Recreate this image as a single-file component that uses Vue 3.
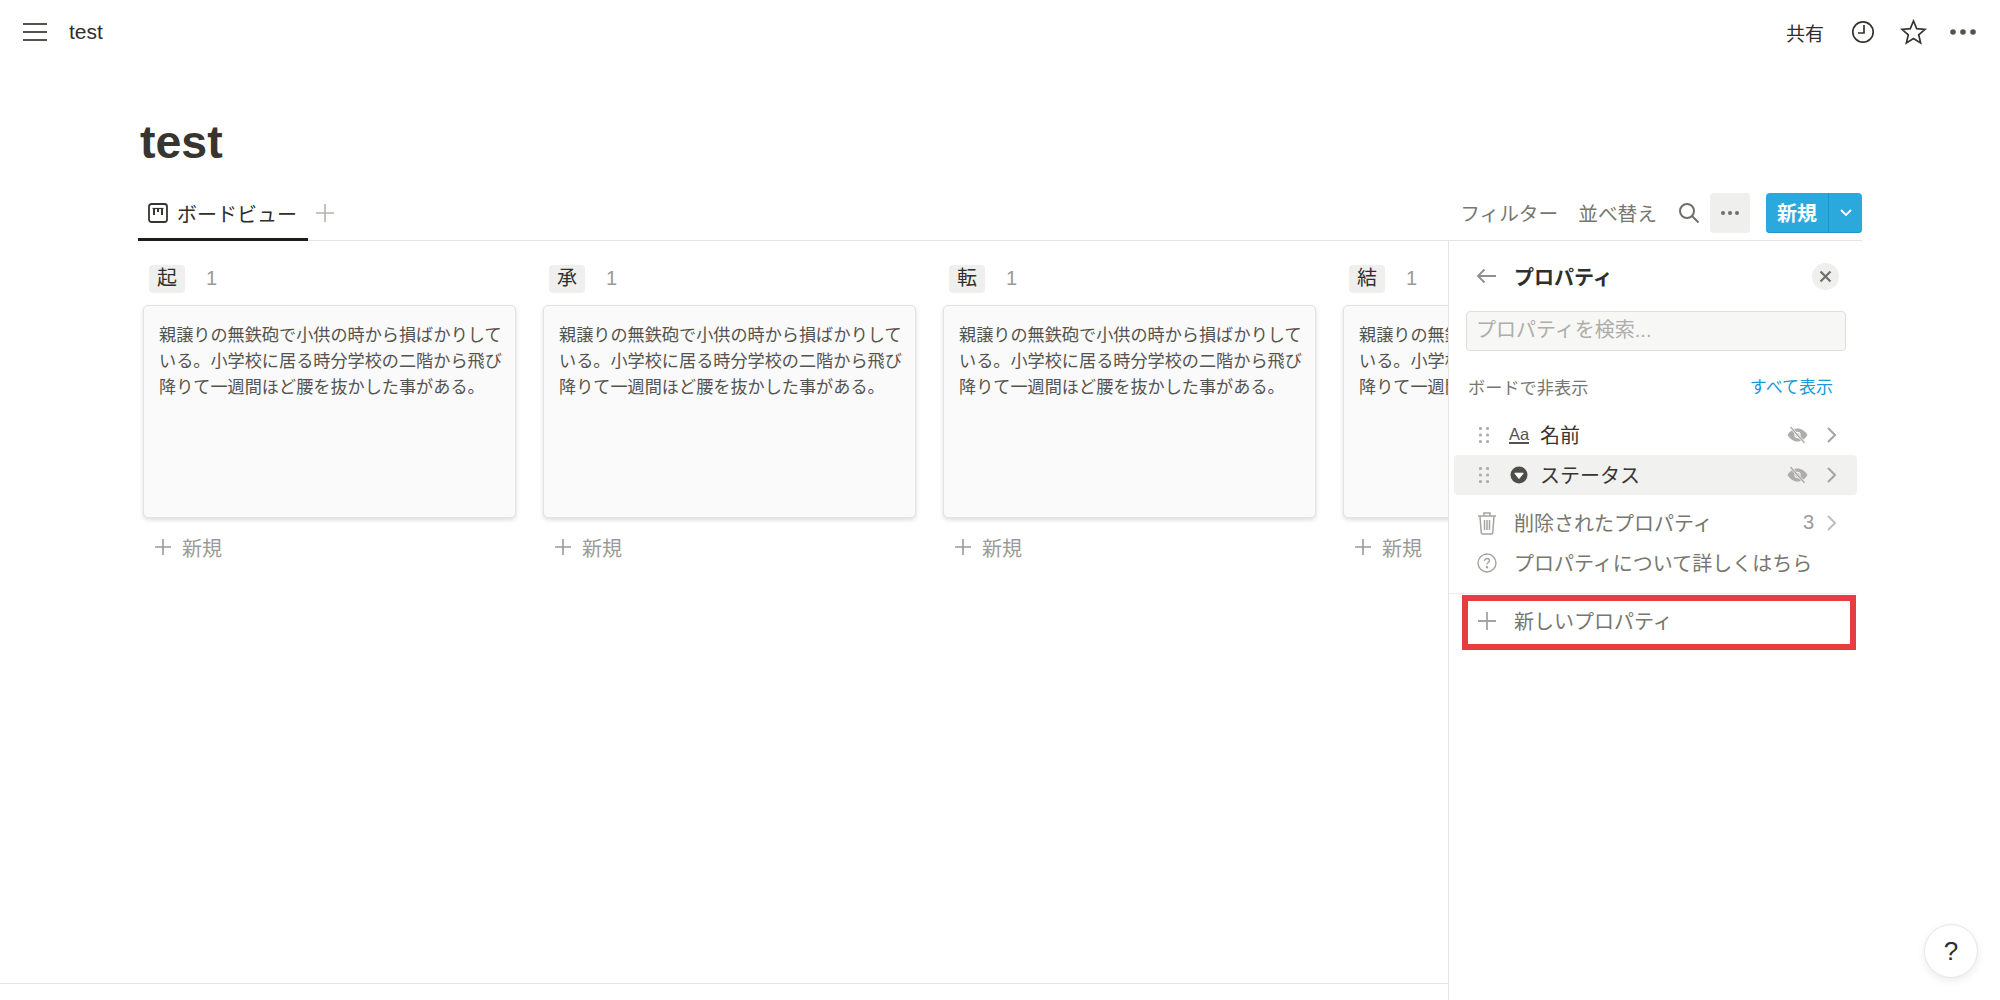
<template>
  <div class="page">
    <header class="topbar">
      <svg class="menu" width="24" height="20" viewBox="0 0 24 20"><path d="M0 2h24M0 10h24M0 18h24" stroke="#55534e" stroke-width="2.2" /></svg>
      <span class="crumb">test</span>
      <div class="top-actions">
        <span class="share">共有</span>
        <svg width="24" height="24" viewBox="0 0 24 24" fill="none" stroke="#37352f" stroke-width="1.7"><circle cx="12" cy="12" r="10.2" /><path d="M13 5v8H7" /></svg>
        <svg class="star" width="27" height="26" viewBox="0 0 27 26" fill="none" stroke="#37352f" stroke-width="1.7" stroke-linejoin="miter"><path d="M13.5 2l3.2 7.7 8.3.7-6.3 5.4 1.9 8.1-7.1-4.300-7.1 4.300 1.9-8.100L2 10.400l8.300-.7z" /></svg>
        <svg width="26" height="6" viewBox="0 0 26 6" fill="#55534e"><circle cx="3" cy="3" r="2.8" /><circle cx="13" cy="3" r="2.8" /><circle cx="23" cy="3" r="2.8" /></svg>
      </div>
    </header>

    <h1 class="title">test</h1>

    <div class="tabs">
      <div class="tab">
        <svg width="20" height="20" viewBox="0 0 20 20" fill="none" stroke="#37352f"><rect x="1" y="1" width="18" height="18" rx="2.5" stroke-width="1.8" /><path d="M4.500 5.500h11" stroke-width="1.2" /><path d="M6 5v7M10 5v4M14 5v7" stroke-width="2" /></svg>
        <span>ボードビュー</span>
      </div>
      <svg class="tab-add" width="18" height="18" viewBox="0 0 18 18"><path d="M9 0v18M0 9h18" stroke="#b3b2af" stroke-width="1.6" /></svg>
      <div class="tools">
        <span class="tool-filter">フィルター</span>
        <span class="tool-sort">並べ替え</span>
        <svg width="22" height="22" viewBox="0 0 22 22" fill="none" stroke="#6f6e69" stroke-width="2"><circle cx="9" cy="9" r="7" /><path d="M14 14l6.5 6.5" /></svg>
        <div class="more">
          <svg width="18" height="4" viewBox="0 0 18 4" fill="#6f6e69"><circle cx="2" cy="2" r="2" /><circle cx="9" cy="2" r="2" /><circle cx="16" cy="2" r="2" /></svg>
        </div>
        <div class="new-btn">
          <span class="new-label">新規</span>
          <span class="new-arrow">
            <svg width="12" height="8" viewBox="0 0 12 8" fill="none" stroke="#fff" stroke-width="1.8"><path d="M1 1l5 5 5-5" /></svg>
          </span>
        </div>
      </div>
    </div>

    <div class="content">
      <div class="board">
        <section v-for="col in columns" :key="col" class="column">
          <div class="col-head">
            <span class="pill">{{ col }}</span>
            <span class="count">1</span>
          </div>
          <div class="card">{{ body }}</div>
          <div class="add">
            <svg width="18" height="18" viewBox="0 0 18 18"><path d="M9 1v16M1 9h16" stroke="#9b9a97" stroke-width="1.6" /></svg>
            <span>新規</span>
          </div>
        </section>
      </div>

      <aside class="panel">
        <div class="panel-head">
          <svg width="20" height="16" viewBox="0 0 20 16" fill="none" stroke="#8f8e8a" stroke-width="1.8"><path d="M20 8H2M8.5 1.500L2 8l6.500 6.500" /></svg>
          <span class="panel-title">プロパティ</span>
          <span class="close">
            <svg width="13" height="13" viewBox="0 0 13 13" stroke="#6f6e69" stroke-width="2.2"><path d="M1.500 1.500l10 10M11.500 1.500l-10 10" /></svg>
          </span>
        </div>
        <div class="search">プロパティを検索...</div>
        <div class="hidden-head">
          <span>ボードで非表示</span>
          <span class="show-all">すべて表示</span>
        </div>

        <div class="prop">
          <svg class="grip" width="10" height="16" viewBox="0 0 10 16" fill="#b0afac"><circle v-for="d in grip" :key="d[0] + '-' + d[1]" :cx="d[0]" :cy="d[1]" r="1.6" /></svg>
          <span class="aa">Aa</span>
          <span class="prop-name name-first">名前</span>
          <svg class="eye" width="21" height="16" viewBox="0 0 21 16"><path d="M.5 8C3 4 6.5 1.500 10.500 1.500S18 4 20.500 8c-2.500 4-6 6.500-10 6.500S3 12 .5 8z" fill="#aeadaa" /><circle cx="10.500" cy="8" r="2.600" fill="none" stroke="#fff" stroke-width="1.1" /><path d="M3.500 0l14 16" stroke="#fff" stroke-width="2.6" /><path d="M3.500 0l14 16" stroke="#a3a29f" stroke-width="1.2" /></svg>
          <svg class="chev" width="9" height="16" viewBox="0 0 9 16" fill="none" stroke="#a5a4a1" stroke-width="2"><path d="M1 1l7 7-7 7" /></svg>
        </div>
        <div class="prop active">
          <svg class="grip" width="10" height="16" viewBox="0 0 10 16" fill="#b0afac"><circle v-for="d in grip" :key="d[0] + '-' + d[1]" :cx="d[0]" :cy="d[1]" r="1.6" /></svg>
          <svg class="status" width="18" height="18" viewBox="0 0 18 18"><circle cx="9" cy="9" r="8.500" fill="#4f4d47" /><path d="M4.800 7.200h8.400L9 12.600z" fill="#fff" stroke="#fff" stroke-linejoin="round" /></svg>
          <span class="prop-name">ステータス</span>
          <svg class="eye" width="21" height="16" viewBox="0 0 21 16"><path d="M.5 8C3 4 6.5 1.500 10.500 1.500S18 4 20.500 8c-2.500 4-6 6.500-10 6.500S3 12 .5 8z" fill="#aeadaa" /><circle cx="10.500" cy="8" r="2.600" fill="none" stroke="#f1f1f0" stroke-width="1.1" /><path d="M3.500 0l14 16" stroke="#f1f1f0" stroke-width="2.6" /><path d="M3.500 0l14 16" stroke="#a3a29f" stroke-width="1.2" /></svg>
          <svg class="chev" width="9" height="16" viewBox="0 0 9 16" fill="none" stroke="#a5a4a1" stroke-width="2"><path d="M1 1l7 7-7 7" /></svg>
        </div>

        <div class="link first">
          <svg class="link-icon" width="20" height="24" viewBox="0 0 20 24" fill="none" stroke="#a5a4a1" stroke-width="1.5"><path d="M1 5h18M7 5V2h6v3M3 5l1.200 16.500c0 .8.600 1.500 1.500 1.500h8.600c.9 0 1.500-.7 1.500-1.500L17 5M7.500 9v10M10 9v10M12.500 9v10" /></svg>
          <span class="link-text">削除されたプロパティ</span>
          <span class="num">3</span>
          <svg class="chev" width="9" height="16" viewBox="0 0 9 16" fill="none" stroke="#c0bfbc" stroke-width="2"><path d="M1 1l7 7-7 7" /></svg>
        </div>
        <div class="link">
          <svg class="link-icon" width="20" height="20" viewBox="0 0 20 20" fill="none" stroke="#a5a4a1" stroke-width="1.4"><circle cx="10" cy="10" r="9" /><path d="M7.500 8c0-1.600 1.100-2.500 2.500-2.500s2.500 1 2.500 2.200c0 1.800-2.500 1.900-2.500 3.800" /><circle cx="10" cy="14.300" r=".6" /></svg>
          <span class="link-text">プロパティについて詳しくはちら</span>
        </div>

        <div class="new-prop">
          <svg width="20" height="20" viewBox="0 0 20 20"><path d="M10 1v18M1 10h18" stroke="#a5a4a1" stroke-width="1.8" /></svg>
          <span>新しいプロパティ</span>
          <div class="highlight"></div>
        </div>
      </aside>
    </div>

    <div class="help">?</div>
  </div>
</template>

<script setup>
const columns = ['起', '承', '転', '結']
const body = '親譲りの無鉄砲で小供の時から損ばかりしている。小学校に居る時分学校の二階から飛び降りて一週間ほど腰を抜かした事がある。'
const grip = [[1.5, 1.5], [8.5, 1.5], [1.5, 8], [8.5, 8], [1.5, 14.5], [8.5, 14.5]]
</script>

<style>
html, body {
  margin: 0;
  background: #fff;
  overflow: hidden;
}
</style>

<style scoped>
.page {
  position: relative;
  display: flex;
  flex-direction: column;
  height: 1000px;
  overflow: hidden;
  font-family: "Liberation Sans", "Noto Sans CJK JP", sans-serif;
  color: #37352f;
}

.topbar {
  display: flex;
  align-items: center;
  height: 64px;
  padding: 0 24px 0 23px;
  flex: none;
}

.crumb {
  margin-left: 22px;
  font-size: 21px;
  color: #2f2e2a;
}

.top-actions {
  display: flex;
  align-items: center;
  margin-left: auto;
}

.share {
  margin-right: 27px;
  font-size: 19px;
  color: #2f2e2a;
}

.star {
  margin: 0 23px 0 25px;
}

.title {
  margin: 55px 0 0 140px;
  height: 47px;
  font-size: 46.5px;
  line-height: 47px;
  font-weight: 700;
  color: #37352f;
  flex: none;
}

.tabs {
  display: flex;
  align-items: center;
  flex: none;
  width: 1724px;
  height: 75px;
  margin-left: 138px;
  box-sizing: border-box;
  border-bottom: 1px solid #e4e4e2;
}

.tab {
  display: flex;
  align-items: center;
  gap: 9px;
  box-sizing: border-box;
  width: 170px;
  height: 75px;
  padding: 22px 0 0 10px;
  margin-bottom: -1px;
  border-bottom: 3px solid #1d1c19;
  font-size: 20px;
  color: #2f2e2a;
}

.tab-add {
  margin: 19px 0 0 8px;
}

.tools {
  display: flex;
  align-items: center;
  margin: 19px 0 0 auto;
  font-size: 19.7px;
  color: #77766f;
}

.tool-filter {
  margin-right: 20px;
}

.tool-sort {
  margin-right: 21px;
}

.more {
  display: flex;
  align-items: center;
  justify-content: center;
  width: 40px;
  height: 40px;
  margin: 0 16px 0 10px;
  border-radius: 4px;
  background: #efefee;
}

.new-btn {
  display: flex;
  width: 96px;
  height: 40px;
  border-radius: 4px;
  background: #2ba8dc;
  box-shadow: inset 0 -1px 0 #1d97c9;
  color: #fff;
}

.new-label {
  display: flex;
  align-items: center;
  justify-content: center;
  width: 62px;
  font-size: 20px;
  font-weight: 700;
  border-right: 1px solid #1f93c4;
}

.new-arrow {
  display: flex;
  flex: 1;
  align-items: center;
  justify-content: center;
}

.content {
  display: flex;
  flex: 1;
  min-height: 0;
}

.board {
  display: flex;
  gap: 27px;
  width: 1448px;
  flex: none;
  box-sizing: border-box;
  height: 743px;
  padding: 24px 0 0 143px;
  overflow: hidden;
  border-bottom: 1px solid #e4e4e2;
}

.column {
  width: 373px;
  flex: none;
}

.col-head {
  display: flex;
  align-items: center;
  height: 27px;
  margin-bottom: 13px;
  padding-left: 6px;
}

.pill {
  display: block;
  width: 36px;
  height: 28px;
  line-height: 27px;
  text-align: center;
  border-radius: 4px;
  background: #efefee;
  font-size: 20px;
  color: #2f2e2a;
}

.count {
  margin-left: 21px;
  font-size: 20px;
  color: #9b9a97;
}

.card {
  box-sizing: border-box;
  height: 213px;
  padding: 16px 10px 16px 15px;
  border: 1px solid #e2e2e0;
  border-radius: 5px;
  background: #fafafa;
  box-shadow: 0 2px 4px rgba(15, 15, 15, 0.14);
  font-size: 17.15px;
  line-height: 26px;
  color: #55534e;
}

.add {
  display: flex;
  align-items: center;
  gap: 10px;
  height: 30px;
  margin-top: 14px;
  padding-left: 11px;
  font-size: 20px;
  color: #9b9a97;
}

.panel {
  flex: 1;
  box-sizing: border-box;
  height: 760px;
  padding-right: 143px;
  border-left: 1px solid #e4e4e2;
}

.panel-head {
  display: flex;
  align-items: center;
  height: 70px;
  padding: 0 18px 0 27px;
}

.panel-title {
  margin-left: 18px;
  font-size: 20px;
  font-weight: 700;
  color: #2f2e2a;
}

.close {
  display: flex;
  align-items: center;
  justify-content: center;
  width: 27px;
  height: 27px;
  margin-left: auto;
  border-radius: 50%;
  background: #efefee;
}

.search {
  box-sizing: border-box;
  width: 380px;
  height: 40px;
  margin-left: 17px;
  padding-left: 9px;
  line-height: 36px;
  border: 1px solid #dededc;
  border-radius: 4px;
  background: #f7f7f6;
  font-size: 20px;
  color: #aeadaa;
}

.hidden-head {
  display: flex;
  justify-content: space-between;
  height: 28px;
  line-height: 28px;
  margin-top: 23px;
  padding: 0 24px 0 19px;
  font-size: 17.2px;
  color: #77766f;
}

.show-all {
  font-size: 17px;
  color: #1a9ad6;
}

.prop {
  display: flex;
  align-items: center;
  box-sizing: border-box;
  width: 403px;
  height: 40px;
  margin-left: 5px;
  padding: 0 21px 0 25px;
  border-radius: 4px;
  font-size: 20px;
  color: #37352f;
}

.hidden-head + .prop {
  margin-top: 13px;
}

.prop.active {
  background: #f1f1f0;
}

.aa {
  width: 20px;
  margin-left: 20px;
  font-size: 16.5px;
  line-height: 16px;
  border-bottom: 2px solid #55534e;
  color: #55534e;
}

.status {
  margin-left: 21px;
  margin-right: 2px;
}

.prop-name {
  margin: 0 0 2px 10px;
}

.name-first {
  margin-left: 11px;
}

.eye {
  margin-left: auto;
}

.prop .chev {
  margin-left: 19px;
}

.link {
  display: flex;
  align-items: center;
  height: 40px;
  padding: 0 21px 0 28px;
  font-size: 20px;
  color: #77766f;
}

.link-icon {
  flex: none;
}

.link-text {
  margin: 0 0 2px 17px;
}

.link.first {
  margin-top: 8px;
}

.num {
  margin: 0 13px 2px auto;
  color: #9b9a97;
}

.new-prop {
  position: relative;
  display: flex;
  align-items: center;
  gap: 17px;
  height: 56px;
  margin-top: 10px;
  padding: 0 0 2px 28px;
  box-sizing: border-box;
  border-top: 1px solid #ececeb;
  font-size: 20px;
  color: #77766f;
}

.highlight {
  position: absolute;
  left: 13px;
  top: 1px;
  width: 394px;
  height: 55px;
  box-sizing: border-box;
  border: 6px solid #e53e3e;
}

.help {
  position: absolute;
  left: 1924px;
  top: 924px;
  width: 54px;
  height: 54px;
  box-sizing: border-box;
  border: 1px solid #e6e6e4;
  border-radius: 50%;
  background: #fff;
  box-shadow: 0 3px 8px rgba(15, 15, 15, 0.08);
  text-align: center;
  line-height: 52px;
  font-size: 26px;
  color: #2f2e2a;
}
</style>
